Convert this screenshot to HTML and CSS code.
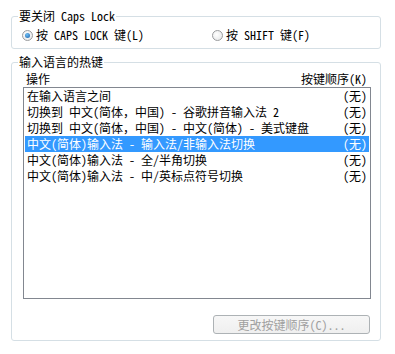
FILE: index.html
```html
<!DOCTYPE html>
<html lang="zh-CN">
<head>
    <meta charset="UTF-8">
    <title>高级键设置</title>
    <link rel="stylesheet" href="styles.css">
</head>
<body>

    <!-- Caps Lock -->
    <fieldset class="group group-caps">
        <legend>要关闭 Caps Lock</legend>
        <div class="radios">
            <label class="radio-item"><span class="radio checked"></span>按 CAPS LOCK 键(L)</label>
            <label class="radio-item"><span class="radio"></span>按 SHIFT 键(F)</label>
        </div>
    </fieldset>

    <!-- Hotkeys -->
    <fieldset class="group group-keys">
        <legend>输入语言的热键</legend>
        <div class="list-head">
            <span>操作</span>
            <span>按键顺序(K)</span>
        </div>
        <div class="listbox">
            <div class="row"><span>在输入语言之间</span><span>(无)</span></div>
            <div class="row"><span>切换到 中文(简体，中国) - 谷歌拼音输入法 2</span><span>(无)</span></div>
            <div class="row"><span>切换到 中文(简体，中国) - 中文(简体) - 美式键盘</span><span>(无)</span></div>
            <div class="row selected"><span>中文(简体)输入法 - 输入法/非输入法切换</span><span>(无)</span></div>
            <div class="row"><span>中文(简体)输入法 - 全/半角切换</span><span>(无)</span></div>
            <div class="row"><span>中文(简体)输入法 - 中/英标点符号切换</span><span>(无)</span></div>
        </div>
        <div class="actions">
            <button disabled>更改按键顺序(C)...</button>
        </div>
    </fieldset>

</body>
</html>
```

FILE: styles.css
```css
/* Page */
body {
    margin: 0;
    padding: 10px 0 0 11px;
    background: #ffffff;
    font-family: "Noto Sans Mono CJK SC", "Noto Sans CJK SC", sans-serif;
    font-size: 12px;
    line-height: 12px;
    color: #000000;
}

/* Group boxes */
.group {
    width: 370px;
    box-sizing: border-box;
    margin: 0;
    border: 1px solid #d5dfe5;
    border-radius: 3px;
    min-width: 0;
}

.group legend {
    padding: 0 1px;
    margin-left: -5px;
    line-height: 12px;
}

.group-caps {
    padding: 6px 9px 6px 11px;
}

.group-keys {
    margin-top: 7px;
    padding: 0 9px 6px 11px;
}

/* Radio buttons */
.radios {
    display: grid;
    grid-template-columns: 190px 1fr;
    margin-left: -1px;
}

.radio-item {
    display: flex;
    align-items: center;
    gap: 3px;
    height: 14px;
}

.radio {
    width: 11px;
    height: 11px;
    box-sizing: border-box;
    border: 1px solid #9a9c9e;
    border-radius: 50%;
    background: radial-gradient(circle at 40% 40%, #ffffff, #e2e3e4);
    display: flex;
    align-items: center;
    justify-content: center;
}

.radio.checked::after {
    content: "";
    width: 5px;
    height: 5px;
    border-radius: 50%;
    background: radial-gradient(circle at 40% 35%, #6ec0f5, #1a5ea8);
}

/* List header */
.list-head {
    display: flex;
    justify-content: space-between;
    margin-top: 5px;
    padding: 0 4px 0 3px;
    height: 12px;
}

/* List box */
.listbox {
    margin-top: 2px;
    height: 212px;
    box-sizing: border-box;
    border: 1px solid #828790;
    padding: 0 1px;
}

.row {
    display: flex;
    justify-content: space-between;
    height: 16px;
    line-height: 16px;
    padding: 0 2px;
    white-space: nowrap;
}

.row.selected {
    background: #3399ff;
    color: #ffffff;
}

/* Button */
.actions {
    display: flex;
    justify-content: flex-end;
    margin-top: 16px;
    padding-right: 1px;
}

button {
    width: 157px;
    height: 19px;
    padding: 0;
    font-family: inherit;
    font-size: 12px;
    line-height: 12px;
    color: #a0a0a0;
    background: linear-gradient(#f7f7f7, #efefef);
    border: 1px solid #adb2b5;
    border-radius: 3px;
}
```
